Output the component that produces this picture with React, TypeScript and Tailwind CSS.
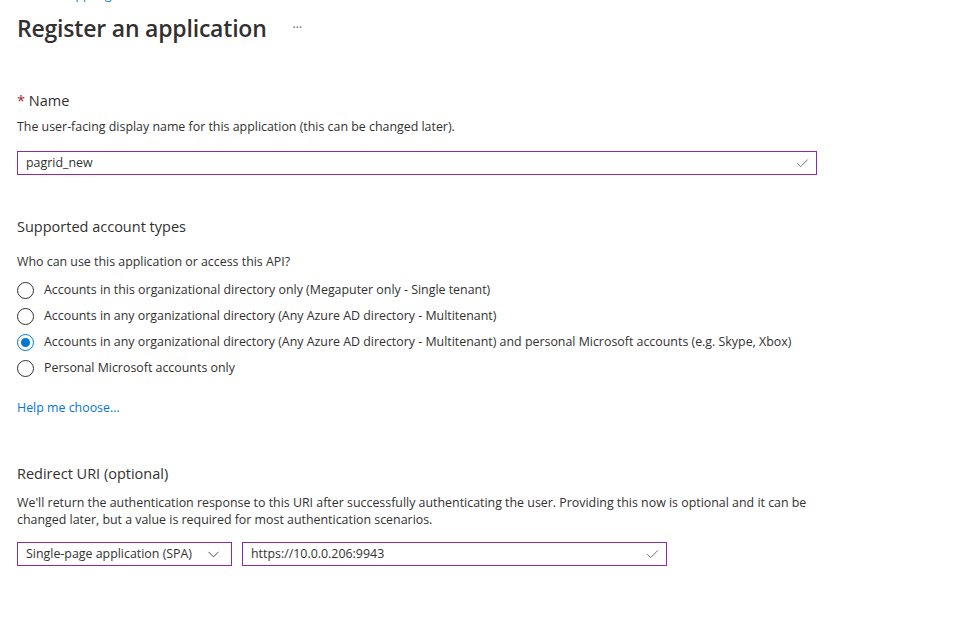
import { Check, ChevronDown } from "lucide-react"

const accountTypes = [
  "Accounts in this organizational directory only (Megaputer only - Single tenant)",
  "Accounts in any organizational directory (Any Azure AD directory - Multitenant)",
  "Accounts in any organizational directory (Any Azure AD directory - Multitenant) and personal Microsoft accounts (e.g. Skype, Xbox)",
  "Personal Microsoft accounts only",
]

function Radio({ label, checked }: { label: string; checked?: boolean }) {
  return (
    <label className="flex items-center h-[26px] gap-[10px]">
      <span
        className={`w-[17px] h-[17px] rounded-full border flex items-center justify-center ${
          checked ? "border-[#0078d4]" : "border-[#323130]"
        }`}
      >
        {checked && <span className="w-[9px] h-[9px] rounded-full bg-[#0078d4]" />}
      </span>
      <span>{label}</span>
    </label>
  )
}

export default function App() {
  return (
    <div
      className="min-h-screen bg-white text-[#323130] text-[12.4px] px-[17px]"
      style={{ fontFamily: '"Open Sans", "Noto Sans", sans-serif' }}
    >
      {/* breadcrumb, scrolled out of view */}
      <div className="h-[3px] overflow-hidden pl-[4px]">
        <div className="text-[#0078d4] text-[12px] leading-[14px] -mt-[12px]">Home &gt; App registrations</div>
      </div>

      {/* Header */}
      <div className="flex items-center h-[46px] mt-[2px]">
        <h1 className="text-[23px] font-semibold text-[#323130] tracking-[-0.2px]">Register an application</h1>
        <span className="ml-[26px] text-[#605e5c] text-[12px] leading-none">···</span>
      </div>

      {/* Name */}
      <div className="mt-[40px]">
        <div className="text-[14.5px] leading-[20px] h-[22px]">
          <span className="text-[#a4262c]">*</span> Name
        </div>
        <p className="mt-[6px] leading-[16px]">
          The user-facing display name for this application (this can be changed later).
        </p>
        <div className="mt-[16px] w-[800px] h-[24px] border border-[#8a2da5] flex items-center pl-[8px] pr-[6px]">
          <span className="flex-1">pagrid_new</span>
          <Check className="w-[15px] h-[15px] text-[#605e5c]" strokeWidth={1.4} />
        </div>
      </div>

      {/* Supported account types */}
      <div className="mt-[42px]">
        <h2 className="text-[14.5px] leading-[20px]">Supported account types</h2>
        <p className="mt-[17px] leading-[16px]">Who can use this application or access this API?</p>
        <div className="mt-[7px] flex flex-col">
          {accountTypes.map((t, i) => (
            <Radio key={t} label={t} checked={i === 2} />
          ))}
        </div>
        <a href="#" className="block mt-[19px] text-[#0078d4] leading-[16px]">
          Help me choose...
        </a>
      </div>

      {/* Redirect URI */}
      <div className="mt-[48px]">
        <h2 className="text-[14.5px] leading-[20px]">Redirect URI (optional)</h2>
        <p className="mt-[10px] leading-[17px] w-[800px]">
          We'll return the authentication response to this URI after successfully authenticating the user. Providing
          this now is optional and it can be changed later, but a value is required for most authentication scenarios.
        </p>
        <div className="mt-[14px] flex gap-[10px]">
          <div className="w-[215px] h-[24px] border border-[#8a2da5] flex items-center pl-[8px] pr-[8px]">
            <span className="flex-1">Single-page application (SPA)</span>
            <ChevronDown className="w-[19px] h-[19px] text-[#323130]" strokeWidth={1.1} />
          </div>
          <div className="w-[425px] h-[24px] border border-[#8a2da5] flex items-center pl-[8px] pr-[6px]">
            <span className="flex-1">https://10.0.0.206:9943</span>
            <Check className="w-[15px] h-[15px] text-[#605e5c]" strokeWidth={1.4} />
          </div>
        </div>
      </div>
    </div>
  )
}
